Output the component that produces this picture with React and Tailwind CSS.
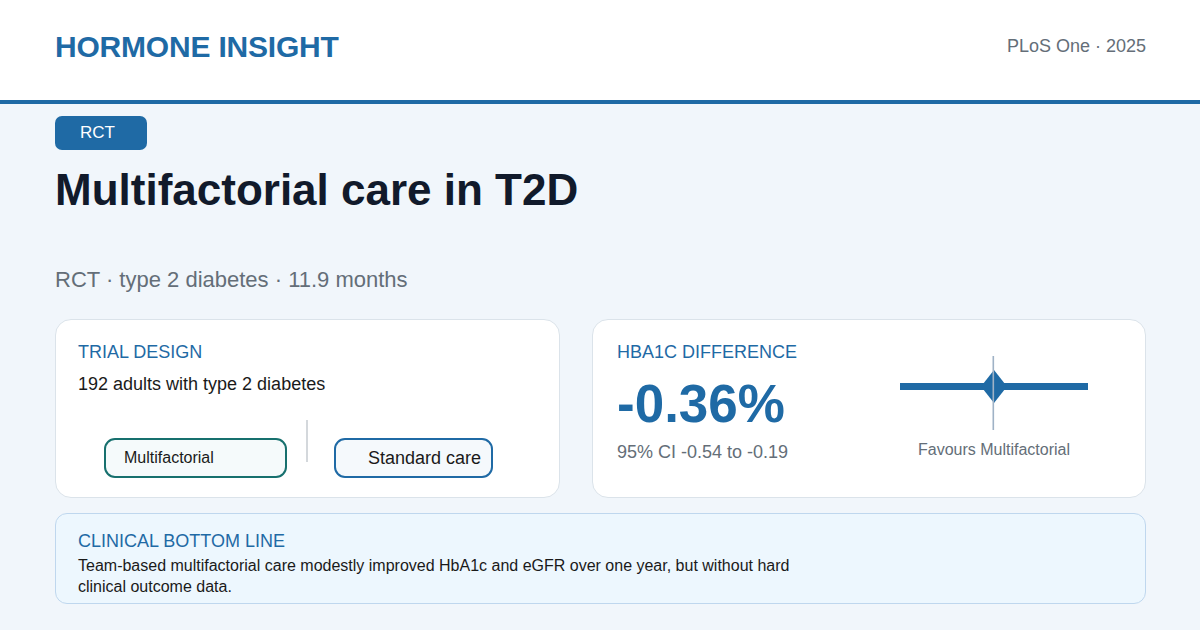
import React from "react";

function ForestPlot() {
  return (
    <svg width="188" height="74" viewBox="0 0 188 74">
      <rect x="0" y="27" width="188" height="7" fill="#1f6aa5" />
      <polygon points="94,14 107,30.5 94,47 81,30.5" fill="#1f6aa5" />
      <rect x="92.5" y="0" width="1.6" height="74" fill="#9fb2c6" />
    </svg>
  );
}

export default function App() {
  return (
    <div
      className="w-[1200px] h-[630px] bg-[#f1f6fb] flex flex-col overflow-hidden"
      style={{ fontFamily: '"Liberation Sans", Arial, sans-serif' }}
    >
      <header className="h-[104px] shrink-0 bg-white border-b-4 border-[#1f6aa5] flex items-center justify-between pl-[55px] pr-[54px] pb-[8px]">
        <div className="text-[30px] font-bold text-[#1f6aa5] tracking-[-0.2px]">
          HORMONE INSIGHT
        </div>
        <div className="text-[18px] text-[#646e78]">PLoS One · 2025</div>
      </header>

      <main className="pl-[55px] pr-[54px] pt-[12px] flex flex-col">
        <div className="self-start h-[34px] w-[92px] rounded-[7px] bg-[#1f6aa5] text-white text-[17px] flex items-center pl-[25px]">
          RCT
        </div>
        <h1 className="mt-[14px] text-[44px] leading-[52px] font-bold text-[#111a2b]">
          Multifactorial care in T2D
        </h1>
        <div className="mt-[50px] text-[22px] leading-[28px] text-[#646e78]">
          RCT · type 2 diabetes · 11.9 months
        </div>

        <div className="mt-[25px] flex gap-[32px]">
          <section className="w-[505px] h-[179px] bg-white rounded-[16px] border border-[#dbe3ea] pl-[22px] pt-[20px]">
            <div className="text-[18px] leading-[24px] text-[#1f6aa5]">TRIAL DESIGN</div>
            <div className="mt-[8px] text-[18px] leading-[24px] text-[#1a1a1a]">
              192 adults with type 2 diabetes
            </div>
            <div className="mt-[24px] flex items-start">
              <div className="ml-[26px] mt-[18px] w-[183px] h-[40px] rounded-[11px] border-[2.5px] border-[#17706e] bg-[#f5fafb] flex items-center pl-[18px] text-[16px] text-[#1a1a1a]">
                Multifactorial
              </div>
              <div className="ml-[19px] w-[2px] h-[42px] bg-[#d4d8dc]" />
              <div className="ml-[26px] mt-[18px] w-[159px] h-[40px] rounded-[11px] border-[2.5px] border-[#1f6aa5] bg-[#f5f9fc] flex items-center pl-[32px] text-[18px] text-[#1a1a1a]">
                Standard care
              </div>
            </div>
          </section>

          <section className="w-[554px] h-[179px] bg-white rounded-[16px] border border-[#dbe3ea] pl-[24px] pr-[24px] pt-[20px] flex">
            <div className="w-[250px] flex flex-col">
              <div className="text-[18px] leading-[24px] text-[#1f6aa5]">HBA1C DIFFERENCE</div>
              <div className="mt-[10px] text-[53px] leading-[60px] font-bold text-[#1f6aa5]">
                -0.36%
              </div>
              <div className="mt-[6px] text-[18px] leading-[24px] text-[#646e78]">95% CI -0.54 to -0.19</div>
            </div>
            <div className="flex-1 flex flex-col items-center pt-[16px]">
              <ForestPlot />
              <div className="mt-[8px] text-[16px] leading-[24px] text-[#646e78]">
                Favours Multifactorial
              </div>
            </div>
          </section>
        </div>

        <section className="mt-[15px] h-[91px] rounded-[12px] border border-[#bfd7ee] bg-[#edf7fe] pl-[22px] pt-[15px]">
          <div className="text-[18px] leading-[24px] text-[#1f6aa5]">CLINICAL BOTTOM LINE</div>
          <p className="mt-[2px] max-w-[730px] text-[16px] leading-[21px] text-[#1a1a1a]">
            Team-based multifactorial care modestly improved HbA1c and eGFR over one year, but without hard clinical outcome data.
          </p>
        </section>
      </main>
    </div>
  );
}
